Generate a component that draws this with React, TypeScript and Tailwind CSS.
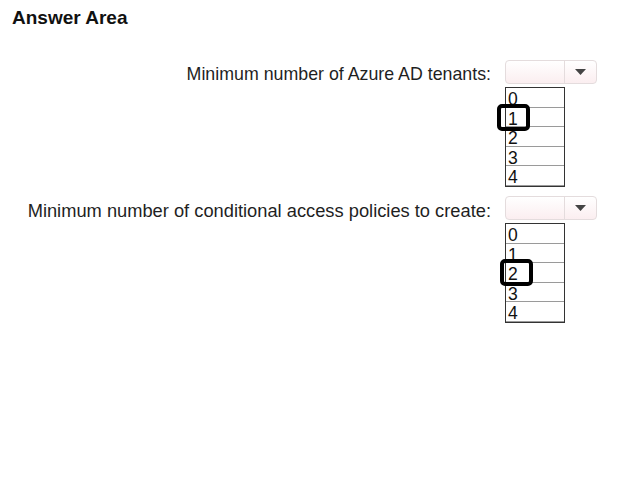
const options = [0, 1, 2, 3, 4];

type AnswerRowProps = {
  label: string;
  labelSize: string;
  selected: number;
  markLeft: string;
};

function AnswerRow({ label, labelSize, selected, markLeft }: AnswerRowProps) {
  return (
    <div className="flex items-start justify-end gap-[14px]">
      <p className={`mt-[6px] leading-none text-[#1f1f1f] ${labelSize}`}>{label}</p>
      <div className="w-[92px]">
        <div className="flex h-[24px] rounded-[4px] border border-[#e4dcdd] bg-gradient-to-b from-white to-[#fbeef0]">
          <div className="w-[59px] border-r border-[#e4dcdd]" />
          <div className="flex flex-1 items-center justify-center">
            <svg width="11" height="6" viewBox="0 0 11 6">
              <path d="M0 0h11L5.5 6z" fill="#444" />
            </svg>
          </div>
        </div>
        <div className="relative mt-[3px] w-[60px] border border-[#333] bg-white">
          {options.map((n) => (
            <div
              key={n}
              className="h-[19.6px] border-b border-[#9a9a9a] pl-[2px] pt-[3px] text-[17.5px] leading-none text-[#111] last:border-b-0"
            >
              {n}
            </div>
          ))}
          <div
            className={`absolute h-[27px] w-[33px] rounded-[5px] border-4 border-black ${markLeft}`}
            style={{ top: selected * 19.6 - 4 }}
          />
        </div>
      </div>
    </div>
  );
}

export default function App() {
  return (
    <div className="h-[487px] w-[624px] bg-white pr-[27px] font-['Liberation_Sans',Arial,sans-serif]">
      <h1 className="pl-3 pt-2 text-[19px] font-bold leading-none text-[#111]">Answer Area</h1>
      <div className="mt-[33px] flex flex-col gap-[9px]">
        <AnswerRow
          label="Minimum number of Azure AD tenants:"
          labelSize="text-[17.8px]"
          selected={1}
          markLeft="left-[-9px]"
        />
        <AnswerRow
          label="Minimum number of conditional access policies to create:"
          labelSize="text-[18.3px]"
          selected={2}
          markLeft="left-[-6px]"
        />
      </div>
    </div>
  );
}
